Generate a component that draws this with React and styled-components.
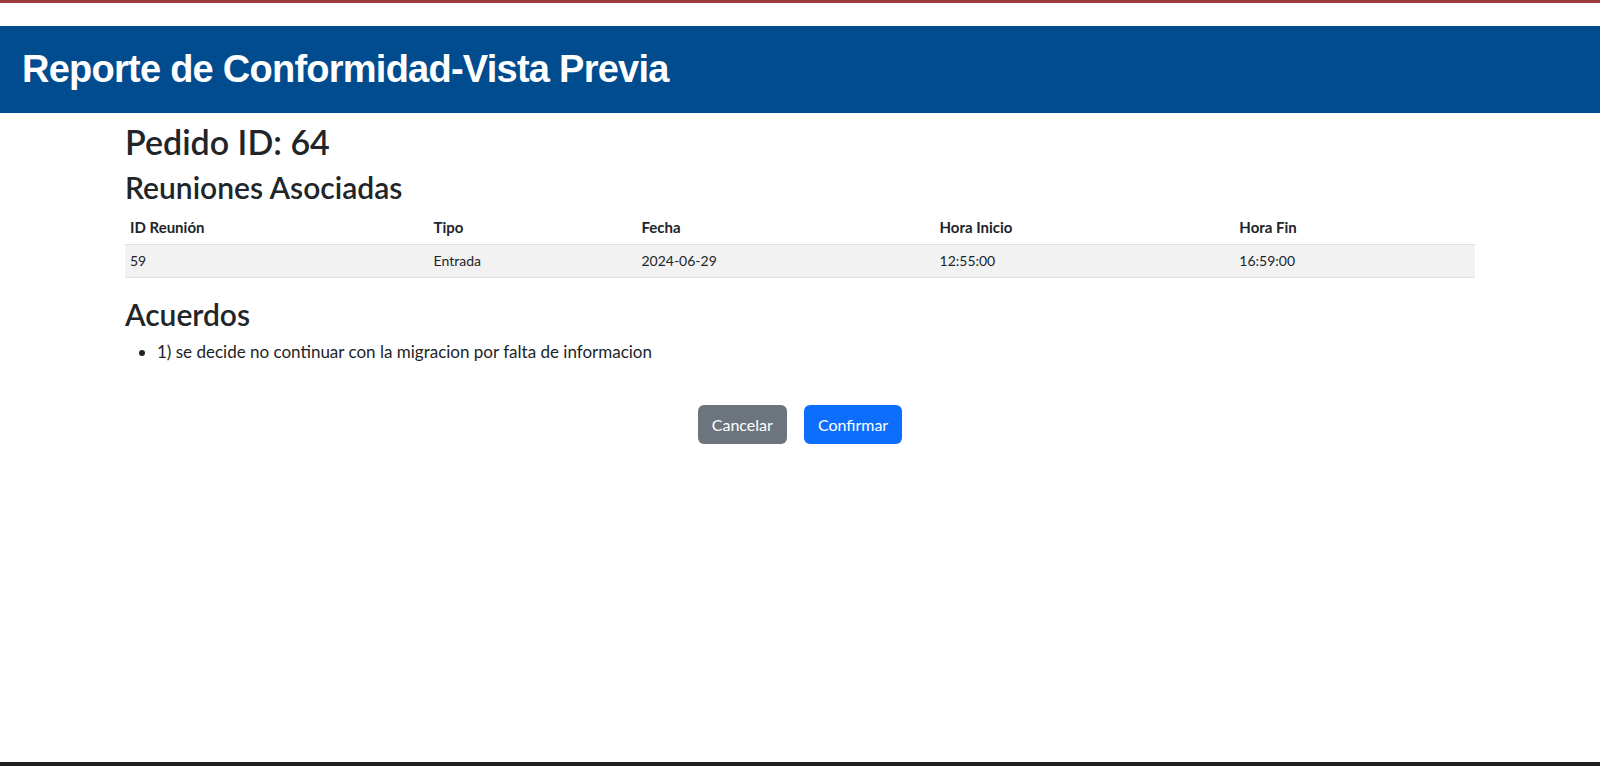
import React from 'react';
import styled, { createGlobalStyle } from 'styled-components';

const GlobalStyle = createGlobalStyle`
  html, body {
    margin: 0;
    padding: 0;
    background: #fff;
  }
  body {
    font-family: Lato, "Noto Sans", "Liberation Sans", sans-serif;
    color: #212529;
    font-size: 16px;
  }
`;

const Page = styled.div`
  min-height: 766px;
  display: flex;
  flex-direction: column;
  border-top: 3px solid #9e3a3f;
  box-sizing: border-box;
`;

const TopGap = styled.div`
  height: 23px;
`;

const Banner = styled.header`
  height: 87px;
  background: #004c8f;
  display: flex;
  align-items: center;
  padding: 0 22px;
`;

const BannerTitle = styled.h1`
  margin: 0;
  color: #fff;
  font-family: "Liberation Sans", Arial, sans-serif;
  font-weight: 700;
  font-size: 38px;
  letter-spacing: -0.75px;
`;

const Main = styled.main`
  flex: 1;
  padding: 9px 125px 0;
`;

const Heading = styled.h2`
  margin: 0 0 ${p => p.$gap || 0}px;
  font-size: ${p => p.$size}px;
  font-weight: 600;
  line-height: 1.2;
`;

const Table = styled.table`
  width: 100%;
  border-collapse: collapse;
  font-size: 14px;
  margin: 5px 0 18px;
`;

const Th = styled.th`
  text-align: left;
  font-weight: 700;
  font-size: 15px;
  padding: 6px 5px;
  height: 22px;
  border-bottom: 1px solid #dee2e6;
  width: ${p => p.$w}px;
`;

const Td = styled.td`
  padding: 6px 5px;
  height: 20px;
  background: #f2f2f2;
  border-bottom: 1px solid #dee2e6;
`;

const List = styled.ul`
  margin: 7px 0 0;
  padding-left: 32px;
  font-size: 17px;
  line-height: 1.5;
`;

const Actions = styled.div`
  display: flex;
  justify-content: center;
  gap: 17px;
  margin-top: 41px;
`;

const Button = styled.button`
  font-family: inherit;
  font-size: 16px;
  line-height: 25px;
  padding: 7px 14px;
  border: none;
  border-radius: 6px;
  color: #fff;
  background: ${p => (p.$primary ? '#0d6efd' : '#6c757d')};
  cursor: pointer;
`;

const BottomStrip = styled.div`
  height: 4px;
  background: #1f1f1f;
`;

const columns = [
  { label: 'ID Reunión', w: 305 },
  { label: 'Tipo', w: 205 },
  { label: 'Fecha', w: 300 },
  { label: 'Hora Inicio', w: 301 },
  { label: 'Hora Fin', w: 239 },
];

const reuniones = [['59', 'Entrada', '2024-06-29', '12:55:00', '16:59:00']];

const App = () => (
  <>
    <GlobalStyle />
    <Page>
      <TopGap />
      <Banner>
        <BannerTitle>Reporte de Conformidad-Vista Previa</BannerTitle>
      </Banner>
      <Main>
        <Heading $size={34} $gap={6}>Pedido ID: 64</Heading>
        <Heading as="h3" $size={30}>Reuniones Asociadas</Heading>
        <Table>
          <thead>
            <tr>
              {columns.map(c => (
                <Th key={c.label} $w={c.w}>{c.label}</Th>
              ))}
            </tr>
          </thead>
          <tbody>
            {reuniones.map(row => (
              <tr key={row[0]}>
                {row.map((cell, i) => (
                  <Td key={i}>{cell}</Td>
                ))}
              </tr>
            ))}
          </tbody>
        </Table>
        <Heading as="h3" $size={30}>Acuerdos</Heading>
        <List>
          <li>1) se decide no continuar con la migracion por falta de informacion</li>
        </List>
        <Actions>
          <Button>Cancelar</Button>
          <Button $primary>Confirmar</Button>
        </Actions>
      </Main>
      <BottomStrip />
    </Page>
  </>
);

export default App;
